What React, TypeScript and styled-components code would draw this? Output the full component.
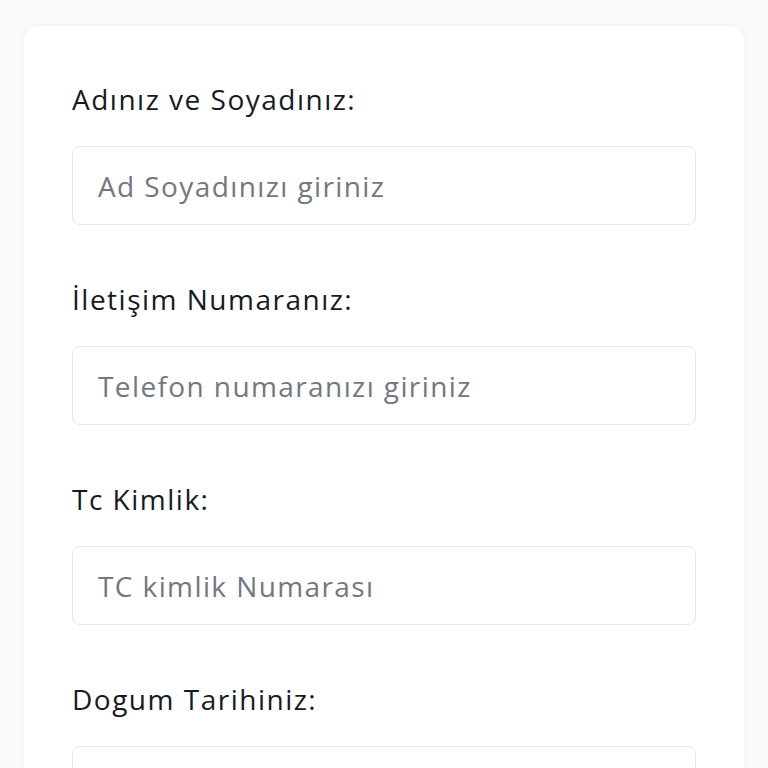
import React from "react";
import styled, { createGlobalStyle } from "styled-components";

const Global = createGlobalStyle`
  html, body { margin: 0; padding: 0; background: #fafafa; }
  body { font-family: "Open Sans", "Noto Sans", sans-serif; }
  * { box-sizing: border-box; }
`;

const Page = styled.div`
  padding: 26px 24px 0 24px;
  height: 768px;
  overflow: hidden;
`;

const Card = styled.div`
  background: #ffffff;
  border-radius: 14px;
  box-shadow: 0 0 6px rgba(0, 0, 0, 0.05);
  padding: 52px 48px 48px 48px;
  display: flex;
  flex-direction: column;
  gap: 53px;
`;

const Field = styled.div`
  display: flex;
  flex-direction: column;
  gap: 26px;
`;

const Label = styled.label`
  font-size: 28px;
  line-height: 42px;
  letter-spacing: 1.5px;
  font-weight: 500;
  color: #161a25;
`;

const Input = styled.input`
  height: 79px;
  width: 100%;
  border: 1.5px solid #e6e7ea;
  border-radius: 8px;
  padding: 0 25px;
  font-family: inherit;
  font-size: 28px;
  letter-spacing: 1.4px;
  color: #161a25;
  background: #fff;
  outline: none;
  &::placeholder { color: #737780; }
`;

const fields = [
  { label: "Adınız ve Soyadınız:", ph: "Ad Soyadınızı giriniz" },
  { label: "İletişim Numaranız:", ph: "Telefon numaranızı giriniz" },
  { label: "Tc Kimlik:", ph: "TC kimlik Numarası" },
  { label: "Dogum Tarihiniz:", ph: "" },
];

export default function App() {
  return (
    <>
      <Global />
      <Page>
        <Card>
          {fields.map((f) => (
            <Field key={f.label}>
              <Label>{f.label}</Label>
              <Input placeholder={f.ph} />
            </Field>
          ))}
        </Card>
      </Page>
    </>
  );
}
